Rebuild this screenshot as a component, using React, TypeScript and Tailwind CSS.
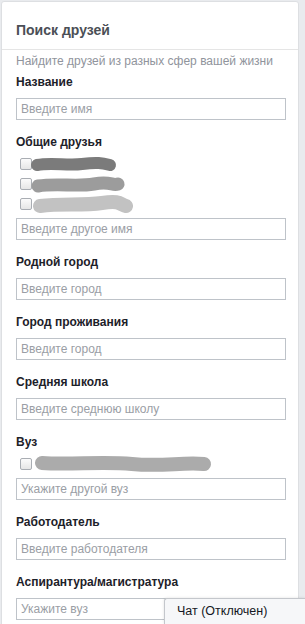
import React from "react";

function Checkbox() {
  return (
    <div className="ml-[4px] h-[12px] w-[12px] shrink-0 rounded-[2px] border border-[#a9adb3] bg-gradient-to-b from-[#fbfbfb] to-[#e6e6e6]" />
  );
}

function Blob({ d, color, width, w = 120 }: { d: string; color: string; width: number; w?: number }) {
  return (
    <svg width={w} height="12" className="shrink-0 overflow-visible" viewBox={`0 0 ${w} 12`}>
      <path d={d} fill="none" stroke={color} strokeWidth={width} strokeLinecap="round" strokeLinejoin="round" />
    </svg>
  );
}

function Label({ children, first }: { children: React.ReactNode; first?: boolean }) {
  return (
    <div className={`${first ? "mt-[5px]" : "mt-[14px]"} text-[12px] leading-[16px] font-bold text-[#1d2129]`}>
      {children}
    </div>
  );
}

function Field({ placeholder }: { placeholder: string }) {
  return (
    <input
      readOnly
      placeholder={placeholder}
      className="block h-[22px] w-[270px] border border-[#bec3c9] bg-white pl-[4px] text-[12px] text-[#1d2129] placeholder:text-[#9a9ea5] outline-none"
    />
  );
}

export default function App() {
  return (
    <div className="relative h-[624px] w-[305px] overflow-hidden bg-[#e9ebee] font-['Liberation_Sans',Arial,sans-serif]">
      <div className="ml-[1px] mt-[1px] h-[700px] w-[298px] rounded-[3px] border border-[#dddfe2] bg-white">
        <div className="border-b border-[#e5e5e5] pl-[14px] pt-[18px] pb-[9px] text-[14px] leading-[20px] font-bold text-[#4b4f56]">
          Поиск друзей
        </div>
        <div className="pl-[14px] pt-[3px]">
          <div className="text-[12px] leading-[16px] text-[#90949c]">Найдите друзей из разных сфер вашей жизни</div>

          <Label first>Название</Label>
          <div className="mt-[8px]">
            <Field placeholder="Введите имя" />
          </div>

          <Label>Общие друзья</Label>
          <div className="mt-[8px] flex flex-col">
            <div className="flex h-[20px] items-start">
              <Checkbox />
              <Blob color="#7b7b7b" width={12} d="M5 7 C 20 4, 35 8, 50 6 S 70 5, 78 7" />
            </div>
            <div className="flex h-[20px] items-start">
              <Checkbox />
              <Blob color="#9c9c9c" width={13} d="M6 8 C 25 5, 45 9, 62 6 S 80 8, 86 6" />
            </div>
            <div className="flex h-[20px] items-start">
              <Checkbox />
              <Blob color="#c2c2c2" width={14} d="M8 8 C 30 5, 50 8, 70 5 S 88 7, 94 8" />
            </div>
            <Field placeholder="Введите другое имя" />
          </div>

          <Label>Родной город</Label>
          <div className="mt-[8px]">
            <Field placeholder="Введите город" />
          </div>

          <Label>Город проживания</Label>
          <div className="mt-[8px]">
            <Field placeholder="Введите город" />
          </div>

          <Label>Средняя школа</Label>
          <div className="mt-[8px]">
            <Field placeholder="Введите среднюю школу" />
          </div>

          <Label>Вуз</Label>
          <div className="mt-[8px] flex flex-col">
            <div className="flex h-[20px] items-start">
              <Checkbox />
              <Blob
                w={200}
                color="#ababab"
                width={14}
                d="M10 5 C 40 7, 70 3, 100 6 S 150 4, 172 6"
              />
            </div>
            <Field placeholder="Укажите другой вуз" />
          </div>

          <Label>Работодатель</Label>
          <div className="mt-[8px]">
            <Field placeholder="Введите работодателя" />
          </div>

          <Label>Аспирантура/магистратура</Label>
          <div className="mt-[8px]">
            <Field placeholder="Укажите вуз" />
          </div>
        </div>
      </div>

      <div className="absolute bottom-0 right-0 h-[26px] w-[141px] rounded-tl-[3px] border-l border-t border-[#c4c7cc] bg-[#f6f7f9] pl-[12px] text-[12.5px] leading-[25px] text-[#141823] shadow-[0_0_3px_rgba(0,0,0,0.12)]">
        Чат (Отключен)
      </div>
    </div>
  );
}
